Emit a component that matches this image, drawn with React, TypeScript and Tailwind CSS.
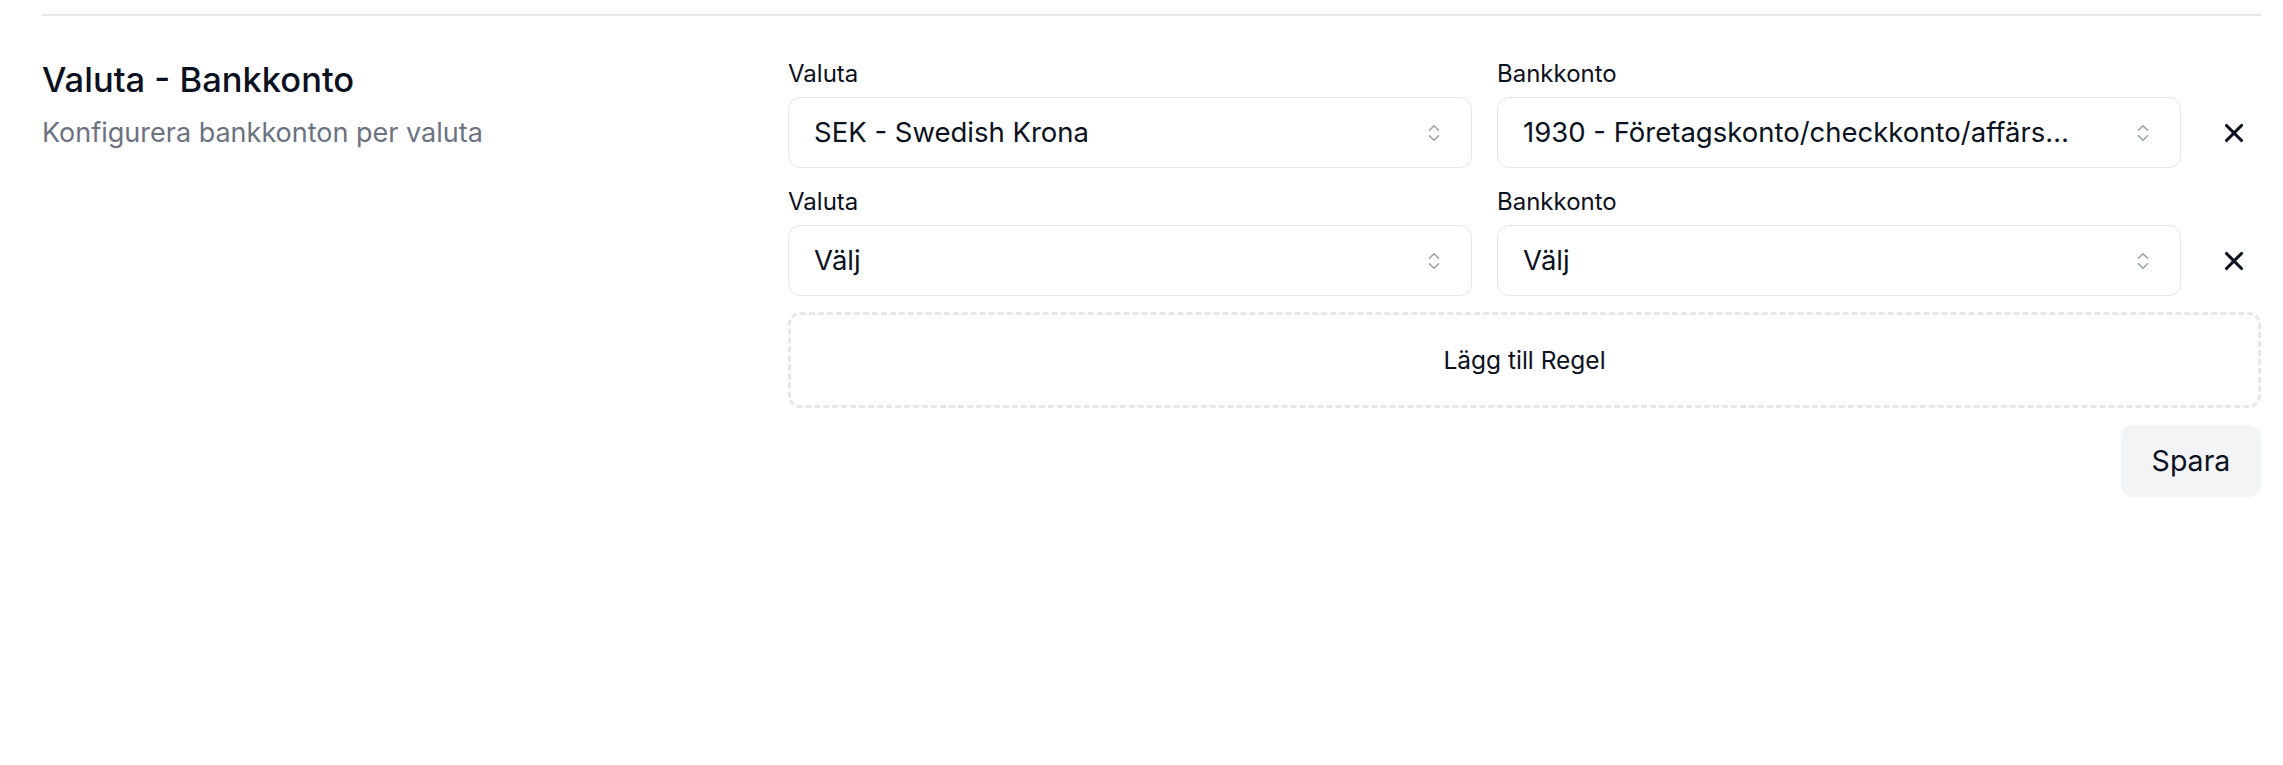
import React from 'react';
import { ChevronsUpDown, X } from 'lucide-react';

interface Rule {
  currency: string;
  account: string;
}

const rules: Rule[] = [
  { currency: 'SEK - Swedish Krona', account: '1930 - Företagskonto/checkkonto/affärskonto' },
  { currency: 'Välj', account: 'Välj' },
];

const SelectBox: React.FC<{ label: string; value: string }> = ({ label, value }) => (
  <div className="flex flex-col gap-[9px] min-w-0">
    <span className="text-[24px] leading-[28px] text-[#0b1120]">{label}</span>
    <button className="h-[71px] w-full flex items-center justify-between rounded-[12px] border-[1.5px] border-[#e2e5ea] bg-white pl-[25px] pr-[26px] text-left">
      <span className="truncate text-[27.5px] text-[#0b1120] pr-[52px]">{value}</span>
      <ChevronsUpDown size={22} strokeWidth={1.5} className="shrink-0 text-gray-500 opacity-70" />
    </button>
  </div>
);

export default function App() {
  return (
    <div className="min-h-[765px] bg-white pl-[42px] pr-[22px] font-['Inter',sans-serif]">
      <div className="border-t-2 border-[#e5e7eb] mt-[14px]" />
      <div className="flex pt-[44px]">
        <div className="w-[746px] shrink-0">
          <h2 className="text-[34.5px] leading-[40px] font-medium text-[#0b1120]">Valuta - Bankkonto</h2>
          <p className="mt-[17px] text-[27px] leading-[32px] text-[#6b7280]">Konfigurera bankkonton per valuta</p>
        </div>
        <div className="flex-1 flex flex-col">
          <div className="flex flex-col gap-[20px]">
            {rules.map((r, i) => (
              <div key={i} className="flex items-end gap-[25px]">
                <div className="flex-1 grid grid-cols-2 gap-[25px]">
                  <SelectBox label="Valuta" value={r.currency} />
                  <SelectBox label="Bankkonto" value={r.account} />
                </div>
                <button className="w-[55px] h-[71px] flex items-center justify-center text-[#0b1120]">
                  <X size={30} strokeWidth={2.5} />
                </button>
              </div>
            ))}
          </div>
          <button className="mt-[16px] h-[96px] w-full rounded-[12px] border-[3px] border-dashed border-[#e5e7eb] text-[24.5px] text-[#0b1120]">
            Lägg till Regel
          </button>
          <div className="flex justify-end mt-[17px]">
            <button className="h-[72px] w-[140px] rounded-[12px] bg-[#f3f4f6] text-[28.5px] text-[#0b1120]">Spara</button>
          </div>
        </div>
      </div>
    </div>
  );
}
